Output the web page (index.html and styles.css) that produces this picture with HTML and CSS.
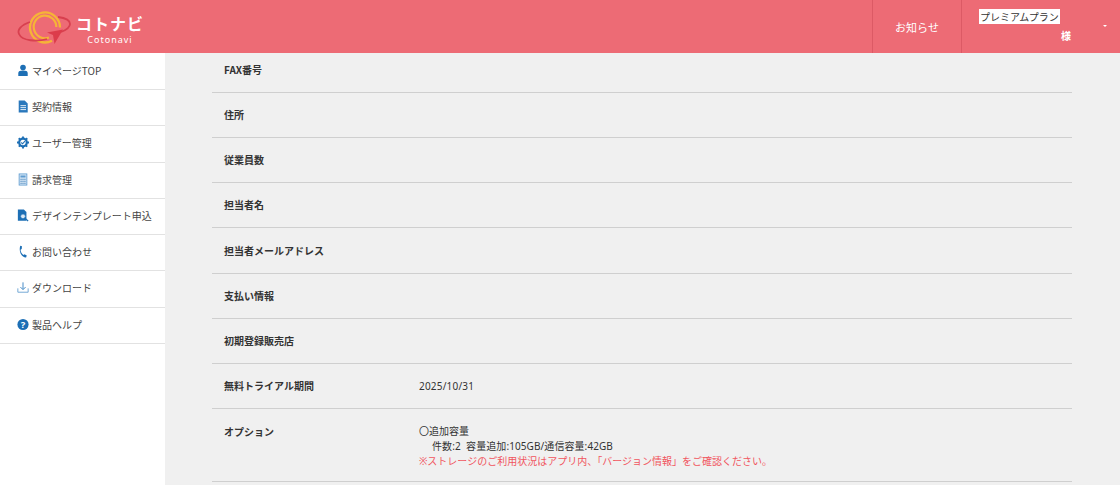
FILE: index.html
```html
<!DOCTYPE html>
<html lang="ja">
<head>
<meta charset="utf-8">
<title>コトナビ</title>
<link rel="stylesheet" href="styles.css">
</head>
<body>
<header class="header">
  <a class="logo">
    <svg class="logo-mark" width="56" height="36" viewBox="0 0 56 36">
      <path d="M36 31.700A15 15 0 1 1 44 18.500" fill="none" stroke="#f6b437" stroke-width="2.300"/>
      <path d="M33 28.500A11.300 11.300 0 1 1 40.300 18" fill="none" stroke="#f6b437" stroke-width="2.200"/>
      <path d="M14 13C5 16 1 21 3 25c3 7 18 8 28 5" fill="none" stroke="#d8404f" stroke-width="1.800"/>
      <path d="M42 8c8 1 12 4 12 7s-4 6-9 8" fill="none" stroke="#d8404f" stroke-width="1.800"/>
      <path d="M47 20.500L31 23.500l6 2.500 1.500 9z" fill="#dc3c4b"/>
    </svg>
    <span class="logo-text">
      <span class="logo-ja">コトナビ</span>
      <span class="logo-en">Cotonavi</span>
    </span>
  </a>
  <nav class="header-nav">
    <a class="notice">お知らせ</a>
    <div class="account">
      <span class="plan">プレミアムプラン</span>
      <span class="sama">様</span>
      <span class="caret"></span>
    </div>
  </nav>
</header>
<div class="layout">
  <aside class="sidebar">
    <a class="side-item">
      <svg class="icon" viewBox="0 0 14 14"><circle cx="7" cy="3.600" r="3.300" fill="#1d6fb5"/><path d="M1.500 13.500V10c0-1.800 1.400-2.800 3-2.800h5c1.600 0 3 1 3 2.800v3.500z" fill="#1d6fb5"/></svg>
      <span>マイページTOP</span>
    </a>
    <a class="side-item">
      <svg class="icon" viewBox="0 0 14 14"><path d="M2 0h7l3.500 3.500V14H2z" fill="#2a78bc"/><path d="M4 6h6.500M4 8.300h6.500M4 10.600h6.500" stroke="#fff" stroke-width="1"/></svg>
      <span>契約情報</span>
    </a>
    <a class="side-item">
      <svg class="icon" viewBox="0 0 14 14"><circle cx="7" cy="7" r="4.400" fill="none" stroke="#1d6fb5" stroke-width="2.600"/><path d="M7 0v14M0 7h14M2 2l10 10M12 2L2 12" stroke="#1d6fb5" stroke-width="2.200" stroke-dasharray="2.200 9.600"/><path d="M5 7l1.500 1.500 2.800-3" fill="none" stroke="#1d6fb5" stroke-width="1.300"/></svg>
      <span>ユーザー管理</span>
    </a>
    <a class="side-item">
      <svg class="icon" viewBox="0 0 14 14"><rect x="2.500" y="0.500" width="9" height="13" fill="#dcebf7" stroke="#5f9bd0"/><rect x="4" y="2.300" width="6" height="2.400" fill="#5f9bd0"/><path d="M4 6.800h1.500M6.250 6.800h1.500M8.500 6.800H10M4 9h1.500M6.250 9h1.500M8.500 9H10M4 11.300h1.500M6.250 11.300h1.500M8.500 11.300H10" stroke="#3f7fb8" stroke-width="1.200"/></svg>
      <span>請求管理</span>
    </a>
    <a class="side-item">
      <svg class="icon" viewBox="0 0 14 14"><path d="M1 0h7l3 3v10H1z" fill="#1d6fb5"/><circle cx="7" cy="8" r="2.800" fill="#d9e8f5" stroke="#1d6fb5" stroke-width="0.800"/><path d="M8.800 9.800l4.200 3.700" stroke="#1d6fb5" stroke-width="1.400"/></svg>
      <span>デザインテンプレート申込</span>
    </a>
    <a class="side-item">
      <svg class="icon" viewBox="0 0 14 14"><path d="M3.800 0.300l2 .7-.3 3.200-1.400.8c0 2.500 1.600 5 3.500 6l1.200-.8 2.600 1.500-.8 2.200C6 14.300 1.500 7.500 3.800.3z" fill="#1d6fb5"/></svg>
      <span>お問い合わせ</span>
    </a>
    <a class="side-item">
      <svg class="icon" viewBox="0 0 14 14"><path d="M1 8v4.500h12V8" fill="none" stroke="#5f9bd0" stroke-width="1"/><path d="M7 1v8M4 6.500L7 9.500l3-3" fill="none" stroke="#3c85c4" stroke-width="1.100"/></svg>
      <span>ダウンロード</span>
    </a>
    <a class="side-item">
      <svg class="icon" viewBox="0 0 14 14"><circle cx="7" cy="7" r="6.500" fill="#1d6fb5"/><text x="7" y="10.800" text-anchor="middle" class="help-q">?</text></svg>
      <span>製品ヘルプ</span>
    </a>
  </aside>
  <main class="main">
    <dl class="info">
      <div class="row row-first"><dt>FAX番号</dt><dd></dd></div>
      <div class="row"><dt>住所</dt><dd></dd></div>
      <div class="row"><dt>従業員数</dt><dd></dd></div>
      <div class="row"><dt>担当者名</dt><dd></dd></div>
      <div class="row"><dt>担当者メールアドレス</dt><dd></dd></div>
      <div class="row"><dt>支払い情報</dt><dd></dd></div>
      <div class="row"><dt>初期登録販売店</dt><dd></dd></div>
      <div class="row"><dt>無料トライアル期間</dt><dd class="date">2025/10/31</dd></div>
      <div class="row row-option">
        <dt>オプション</dt>
        <dd>
          <div>〇追加容量</div>
          <div class="indent">件数:2&nbsp;&nbsp;容量追加:105GB/通信容量:42GB</div>
          <div class="note">※ストレージのご利用状況はアプリ内、「バージョン情報」をご確認ください。</div>
        </dd>
      </div>
    </dl>
  </main>
</div>
</body>
</html>
```
FILE: styles.css
```css
* { box-sizing: border-box; }
html, body { margin: 0; height: 100%; overflow: hidden; }
body {
  font-family: "Noto Sans CJK JP", "Noto Sans", sans-serif;
  font-size: 10px;
  color: #333;
  background: #f0f0f0;
}
.header {
  height: 53px;
  background: #ed6b75;
  display: flex;
  justify-content: space-between;
  color: #fff;
}
.logo { display: flex; align-items: center; padding-left: 16px; gap: 4px; height: 53px; }
.logo-mark { display: block; margin-top: 1px; }
.logo-text { display: flex; flex-direction: column; align-items: center; margin-top: 4px; }
.logo-ja { font-size: 16px; font-weight: 700; line-height: 20px; letter-spacing: 1px; }
.logo-en { font-family: "Noto Sans", sans-serif; font-size: 9px; line-height: 11px; letter-spacing: 1px; margin-top: 1px; }
.header-nav { display: flex; height: 53px; }
.notice {
  width: 89px;
  border-left: 1px solid #dc5a65;
  display: flex; align-items: center; justify-content: center;
  font-size: 11px;
}
.account {
  width: 159px;
  border-left: 1px solid #dc5a65;
  position: relative;
  display: flex; flex-direction: column;
  padding: 9px 0 0 17px;
}
.plan {
  align-self: flex-start;
  background: #fff; color: #333;
  font-size: 10px; line-height: 15px;
  padding: 0 1px;
}
.sama { font-size: 10px; font-weight: 700; line-height: 15px; margin: 4px 0 0 82px; }
.caret {
  position: absolute; right: 13px; top: 25px;
  border-left: 2px solid transparent; border-right: 2px solid transparent;
  border-top: 2px solid #fff;
}
.layout { display: flex; height: 432px; }
.sidebar { width: 165px; background: #fff; flex: none; }
.side-item {
  height: 36.250px;
  display: flex; align-items: center;
  gap: 3px;
  padding: 0 0 2px 17px;
  border-bottom: 1px solid #e2e2e2;
  font-size: 10px;
  color: #444;
}
.side-item:first-child { height: 37px; padding-bottom: 1px; }
.icon { width: 12px; height: 13px; flex: none; }
.help-q { font-size: 11px; font-weight: 700; fill: #fff; font-family: "Noto Sans", sans-serif; }
.main { flex: 1; padding: 0 48px 0 47px; min-width: 0; }
.info { margin: 0; }
.row {
  display: flex;
  height: 45.170px;
  align-items: center;
  padding-bottom: 1px;
  border-bottom: 1px solid #cfcfcf;
}
.row-first { height: 40px; padding-bottom: 0; }
.row-first dt { margin-top: -6px; }
.row dt { width: 207px; font-weight: 700; padding-left: 12px; flex: none; }
.row dd { margin: 0; font-family: "Noto Sans", "Noto Sans CJK JP", sans-serif; }
.row .date { letter-spacing: 0.200px; }
.row-option { height: 73px; align-items: flex-start; padding-top: 15px; }
.row-option dd { line-height: 15px; }
.indent { padding-left: 13px; letter-spacing: 0.080px; }
.note { color: #f0555e; }
```
